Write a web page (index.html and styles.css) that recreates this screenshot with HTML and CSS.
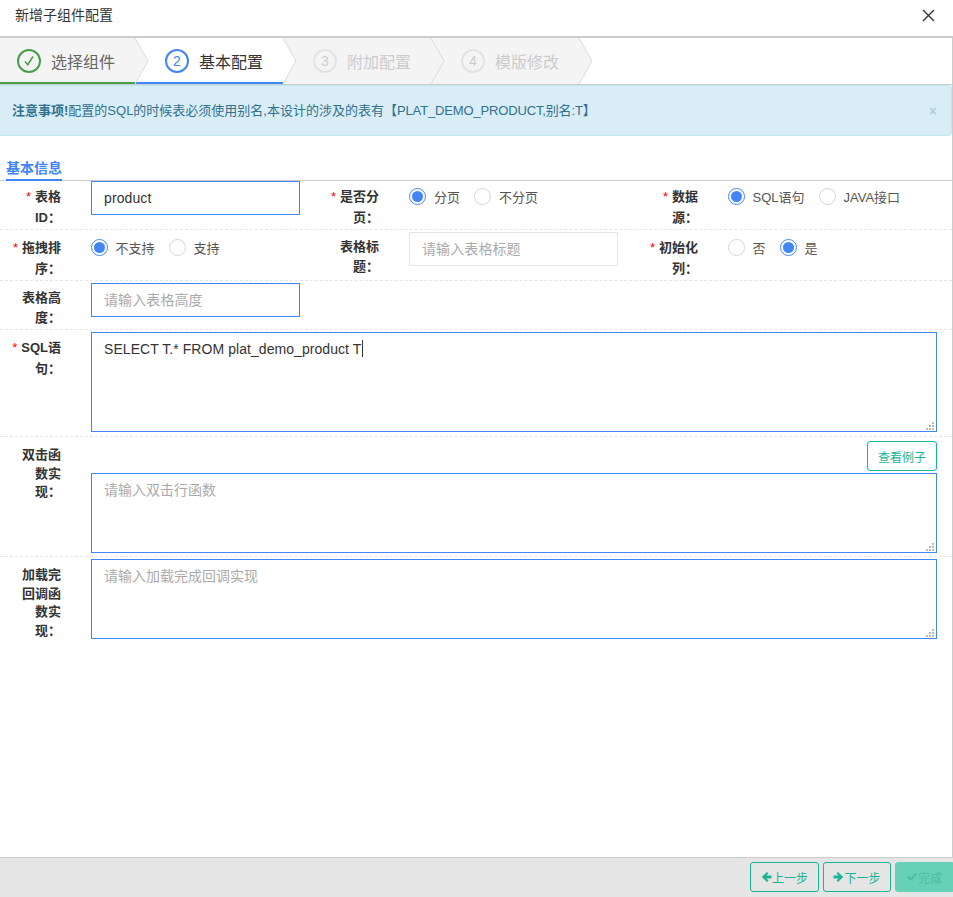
FILE: index.html
```html
<!DOCTYPE html>
<html lang="zh-CN">
<head>
<meta charset="utf-8">
<title>新增子组件配置</title>
<link rel="stylesheet" href="styles.css">
</head>
<body>
<div class="dialog">
  <header class="titlebar">
    <span class="title">新增子组件配置</span>
    <svg class="close" width="13" height="13" viewBox="0 0 13 13"><path d="M1 1l11 11M12 1L1 12" stroke="#333" stroke-width="1.4" fill="none"/></svg>
  </header>
  <main class="content">
    <nav class="steps">
      <div class="step step-first step-done">
        <span class="circle"><svg width="12" height="12" viewBox="0 0 12 12"><path d="M2 6.5l2.8 3.2L10 1.5" stroke="#4a9d4a" stroke-width="1.5" fill="none"/></svg></span>
        <span>选择组件</span>
        <svg class="tip" width="13" height="46" viewBox="0 0 13 46"><path d="M0 0L13 23L0 46Z" fill="#f4f4f4"/><path d="M0 0L13 23L0 46" fill="none" stroke="#dcdcdc"/></svg>
      </div>
      <div class="step step-active">
        <span class="circle">2</span>
        <span>基本配置</span>
        <svg class="tip" width="13" height="46" viewBox="0 0 13 46"><path d="M0 0L13 23L0 46Z" fill="#fff"/><path d="M0 0L13 23L0 46" fill="none" stroke="#dcdcdc"/></svg>
      </div>
      <div class="step step-off">
        <span class="circle">3</span>
        <span>附加配置</span>
        <svg class="tip" width="13" height="46" viewBox="0 0 13 46"><path d="M0 0L13 23L0 46Z" fill="#f4f4f4"/><path d="M0 0L13 23L0 46" fill="none" stroke="#dcdcdc"/></svg>
      </div>
      <div class="step step-off">
        <span class="circle">4</span>
        <span>模版修改</span>
        <svg class="tip" width="13" height="46" viewBox="0 0 13 46"><path d="M0 0L13 23L0 46Z" fill="#f4f4f4"/><path d="M0 0L13 23L0 46" fill="none" stroke="#dcdcdc"/></svg>
      </div>
    </nav>
    <div class="alert">
      <span class="alert-text"><b>注意事项!</b>配置的SQL的时候表必须使用别名,本设计的涉及的表有【<span class="alert-code">PLAT_DEMO_PRODUCT,别名:T</span>】</span>
      <span class="alert-x">×</span>
    </div>
    <div class="tabs"><span class="tab">基本信息</span></div>
    <form class="form">
      <div class="row row-1">
        <div class="field"><label class="label req"><i>*</i>表格ID：</label><input class="input focus" value="product"></div>
        <div class="field"><label class="label req"><i>*</i>是否分页：</label>
          <div class="radios radios-mid"><span class="radio on"></span><span class="opt">分页</span><span class="radio"></span><span class="opt">不分页</span></div></div>
        <div class="field"><label class="label req"><i>*</i>数据源：</label>
          <div class="radios"><span class="radio on"></span><span class="opt">SQL语句</span><span class="radio"></span><span class="opt">JAVA接口</span></div></div>
      </div>
      <div class="row row-2">
        <div class="field"><label class="label req"><i>*</i>拖拽排序：</label>
          <div class="radios"><span class="radio on"></span><span class="opt">不支持</span><span class="radio"></span><span class="opt">支持</span></div></div>
        <div class="field"><label class="label plain">表格标题：</label><input class="input" placeholder="请输入表格标题"></div>
        <div class="field"><label class="label req"><i>*</i>初始化列：</label>
          <div class="radios"><span class="radio"></span><span class="opt">否</span><span class="radio on"></span><span class="opt">是</span></div></div>
      </div>
      <div class="row row-3">
        <div class="field"><label class="label plain">表格高度：</label><input class="input focus" placeholder="请输入表格高度"></div>
      </div>
      <div class="row row-4">
        <label class="label req"><i>*</i>SQL语句：</label>
        <div class="wide">
          <div class="area-wrap">
            <div class="area area-sql">SELECT T.* FROM plat_demo_product T<span class="caret"></span></div>
            <svg class="grip" width="8" height="8" viewBox="0 0 8 8"><path d="M6 0h2v2H6zM3 3h2v2H3zM6 3h2v2H6zM0 6h2v2H0zM3 6h2v2H3zM6 6h2v2H6z" fill="#bbb"/></svg>
          </div>
        </div>
      </div>
      <div class="row row-5">
        <label class="label multi">双击函数实现：</label>
        <div class="wide">
          <div class="wide-tools"><button type="button" class="btn-example">查看例子</button></div>
          <div class="area-wrap">
            <textarea class="area area-80" placeholder="请输入双击行函数"></textarea>
            <svg class="grip" width="8" height="8" viewBox="0 0 8 8"><path d="M6 0h2v2H6zM3 3h2v2H3zM6 3h2v2H6zM0 6h2v2H0zM3 6h2v2H3zM6 6h2v2H6z" fill="#bbb"/></svg>
          </div>
        </div>
      </div>
      <div class="row row-6">
        <label class="label multi">加载完回调函数实现：</label>
        <div class="wide">
          <div class="area-wrap">
            <textarea class="area area-80" placeholder="请输入加载完成回调实现"></textarea>
            <svg class="grip" width="8" height="8" viewBox="0 0 8 8"><path d="M6 0h2v2H6zM3 3h2v2H3zM6 3h2v2H6zM0 6h2v2H0zM3 6h2v2H3zM6 6h2v2H6z" fill="#bbb"/></svg>
          </div>
        </div>
      </div>
    </form>
  </main>
  <footer class="footer">
    <button type="button" class="btn"><svg width="11" height="12" viewBox="0 0 11 12"><path d="M6 1L0.8 6 6 11l1.5-1.500L5.400 7.600H10.500V4.400H5.400L7.500 2.500z" fill="#1ab394"/></svg>上一步</button>
    <button type="button" class="btn btn-next"><svg width="11" height="12" viewBox="0 0 11 12"><path d="M5 1l5.200 5L5 11 3.500 9.500 5.600 7.600H0.500V4.400H5.600L3.500 2.500z" fill="#1ab394"/></svg>下一步</button>
    <button type="button" class="btn btn-done"><svg width="12" height="12" viewBox="0 0 12 12"><path d="M1 6.300l1.600-1.600 2.200 2.200L9.600 2l1.600 1.600-6.400 6.500z" fill="#4cbf9f"/></svg>完成</button>
  </footer>
</div>
</body>
</html>
```
FILE: styles.css
```css
* { box-sizing: border-box; }
html, body { margin: 0; height: 100%; overflow: hidden; }
body {
  font-family: "Liberation Sans", "Noto Sans CJK SC", sans-serif;
  font-size: 13px;
  color: #333;
  background: #fff;
}
.dialog { display: flex; flex-direction: column; height: 100vh; }

.titlebar {
  flex: 0 0 36px;
  display: flex;
  align-items: flex-start;
  justify-content: space-between;
  padding: 5px 18px 0 15px;
}
.title { font-size: 14px; line-height: 20px; color: #333; }
.close { display: block; margin-top: 4px; }

.content {
  flex: 1;
  min-height: 0;
  border-top: 2px solid #ccc;
  border-right: 1.5px solid #ccc;
}

.steps {
  display: flex;
  height: 47px;
  border-bottom: 1px solid #ccc;
}
.step {
  position: relative;
  display: flex;
  align-items: center;
  gap: 10px;
  flex: 0 0 148px;
  height: 46px;
  padding-left: 30px;
  font-size: 16px;
  background: #f4f4f4;
}
.step-first { flex-basis: 135px; padding-left: 17px; z-index: 4; color: #666; box-shadow: inset 0 -2px #4a9d4a; }
.step-active { z-index: 3; background: #fff; color: #333; box-shadow: inset 0 -2px #4285f4; }
.step-off { color: #ccc; z-index: 2; }
.step-off:last-child { z-index: 1; }
.circle {
  display: flex;
  align-items: center;
  justify-content: center;
  width: 24px;
  height: 24px;
  border: 2px solid #e3e3e3;
  border-radius: 50%;
  font-size: 14px;
}
.step-done .circle { border-color: #4a9d4a; }
.step-active .circle { border-color: #4285f4; color: #4285f4; }
.tip { position: absolute; right: -13px; top: 0; display: block; overflow: visible; }

.alert {
  display: flex;
  align-items: center;
  justify-content: space-between;
  height: 51px;
  padding: 0 14px 2px 12px;
  font-size: 13px;
  color: #31708f;
  background: #d9edf7;
  border: 1px solid #bce8f1;
  border-width: 1px 1px 1px 0;
  border-radius: 0 4px 4px 0;
}
.alert-code { letter-spacing: -0.15px; }
.alert-x { font-size: 14px; font-weight: bold; color: #b1cfde; padding-top: 3px; }

.tabs {
  height: 45px;
  padding: 23px 0 0 6px;
  border-bottom: 1px solid #ccc;
}
.tab {
  display: inline-block;
  height: 22px;
  line-height: 18px;
  font-size: 14px;
  font-weight: bold;
  color: #4285f4;
  border-bottom: 2px solid #4285f4;
}

.row {
  display: flex;
  align-items: flex-start;
  padding-top: 2px;
  border-bottom: 1px dashed #e5e5e5;
}
.row-1 { height: 49px; padding-top: 0; }
.row-2 { height: 51px; }
.row-3 { height: 49px; }
.row-4 { height: 107px; }
.row-5 { height: 120px; }
.row-6 { border-bottom: 0; }

.field { display: flex; align-items: flex-start; flex: 0 0 319px; }
.field:first-child { flex-basis: 318px; }
.label {
  flex: 0 0 61px;
  width: 61px;
  margin-right: 30px;
  padding-left: 12px;
  text-align: right;
  font-weight: bold;
  color: #333;
}
.label i { display: inline-block; width: 9px; font-style: normal; font-weight: normal; color: #f00; text-align: left; }
.req { line-height: 21px; padding-top: 5px; }
.plain { line-height: 19.5px; padding-top: 5px; }
.multi { line-height: 18.5px; padding-top: 7px; }

.input {
  display: block;
  width: 209px;
  height: 34px;
  padding: 0 12px;
  font: inherit;
  font-size: 14px;
  letter-spacing: 0.1px;
  color: #333;
  background: #fff;
  border: 1px solid #e5e5e5;
  outline: none;
}
.focus { border-color: #4285f4; }
::placeholder { color: #aaa; opacity: 1; }

.radios { display: flex; align-items: center; padding-top: 7px; height: 24px; }
.radio {
  position: relative;
  flex: none;
  width: 17px;
  height: 17px;
  border: 1px solid #d5d5d5;
  border-radius: 50%;
  background: #fff;
}
.radio.on { border-color: #4285f4; }
.radio.on::after {
  content: "";
  position: absolute;
  inset: 2px;
  border-radius: 50%;
  background: #4285f4;
}
.opt { margin: 0 14.5px 0 7.5px; color: #555; font-size: 13px; }
.radios-mid .opt { margin: 0 14px 0 8px; }

.wide { flex: 0 0 846px; }
.wide-tools { display: flex; justify-content: flex-end; padding: 2px 0 2px; }
.btn-example {
  width: 70px;
  height: 30px;
  padding: 0;
  font: inherit;
  font-size: 12px;
  color: #1ab394;
  background: #fff;
  border: 1px solid #1ab394;
  border-radius: 3px;
}
.area-wrap { position: relative; }
.area {
  display: block;
  width: 100%;
  padding: 6px 12px;
  font: inherit;
  font-size: 14px;
  line-height: 20px;
  color: #333;
  background: #fff;
  border: 1px solid #4285f4;
  outline: none;
  resize: none;
}
.area-sql { height: 100px; letter-spacing: 0.06px; }
.area-80 { height: 80px; }
.caret { display: inline-block; width: 1px; height: 17px; margin-left: 1px; vertical-align: -3px; background: #333; }
.grip { position: absolute; right: 3px; bottom: 2px; display: block; }

.footer {
  flex: 0 0 40px;
  display: flex;
  justify-content: flex-end;
  gap: 4px;
  padding-top: 4px;
  background: #e5e5e5;
  border-top: 1px solid #ccc;
}
.btn {
  display: inline-flex;
  align-items: center;
  justify-content: center;
  width: 69px;
  height: 30px;
  padding: 0;
  font: inherit;
  font-size: 12px;
  color: #1ab394;
  background: transparent;
  border: 1px solid #1ab394;
  border-radius: 3px;
}
.btn-next { width: 68px; }
.btn-done { width: 58px; color: #4cbf9f; background: #66d1b6; border-color: #66d1b6; border-radius: 3px 0 0 3px; }
```
